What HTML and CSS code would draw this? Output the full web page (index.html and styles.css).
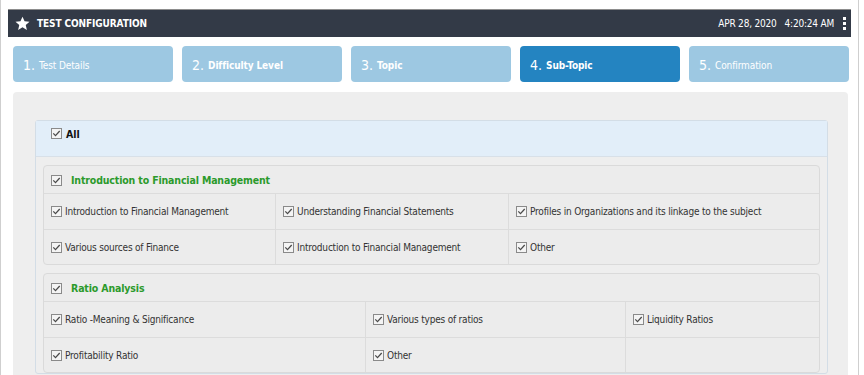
FILE: index.html
```html
<!DOCTYPE html>
<html>
<head>
<meta charset="utf-8">
<link rel="stylesheet" href="styles.css">
</head>
<body>
<div class="frame">
  <header class="topbar">
    <div class="title">
      <svg class="star" width="15" height="15" viewBox="0 0 24 24"><path fill="#fff" d="M12 1l3.3 7.3 7.9.8-6 5.3 1.8 7.8L12 18.1l-7 4.1 1.8-7.8-6-5.3 7.9-.8z"/></svg>
      <span>TEST CONFIGURATION</span>
    </div>
    <div class="meta">
      <span class="date">APR 28, 2020&nbsp;&nbsp;&nbsp;4:20:24 AM</span>
      <span class="kebab"><i></i><i></i><i></i></span>
    </div>
  </header>

  <nav class="steps">
    <div class="step"><span class="num">1.</span><span class="lbl">Test Details</span></div>
    <div class="step"><span class="num">2.</span><span class="lbl b">Difficulty Level</span></div>
    <div class="step"><span class="num">3.</span><span class="lbl b">Topic</span></div>
    <div class="step active"><span class="num">4.</span><span class="lbl b">Sub-Topic</span></div>
    <div class="step"><span class="num">5.</span><span class="lbl">Confirmation</span></div>
  </nav>

  <main class="panel">
    <div class="allbox">
      <div class="allhead">
        <span class="cb"><svg width="11" height="11" viewBox="0 0 11 11"><rect x="0.5" y="0.5" width="10" height="10" fill="#f4f4f4" stroke="#8a8a8a"/><path d="M2.3 5.4l2.2 2.2 4.2-4.6" fill="none" stroke="#4a4a4a" stroke-width="1.3"/></svg></span>
        <span class="alltxt">All</span>
      </div>
      <div class="allbody">
        <section class="group">
          <div class="ghead">
            <span class="cb"><svg width="11" height="11" viewBox="0 0 11 11"><rect x="0.5" y="0.5" width="10" height="10" fill="#f4f4f4" stroke="#8a8a8a"/><path d="M2.3 5.4l2.2 2.2 4.2-4.6" fill="none" stroke="#4a4a4a" stroke-width="1.3"/></svg></span>
            <span class="gtitle">Introduction to Financial Management</span>
          </div>
          <div class="grid cols-a">
            <div class="cell"><span class="cb"><svg width="11" height="11" viewBox="0 0 11 11"><rect x="0.5" y="0.5" width="10" height="10" fill="#f4f4f4" stroke="#8a8a8a"/><path d="M2.3 5.4l2.2 2.2 4.2-4.6" fill="none" stroke="#4a4a4a" stroke-width="1.3"/></svg></span>Introduction to Financial Management</div>
            <div class="cell"><span class="cb"><svg width="11" height="11" viewBox="0 0 11 11"><rect x="0.5" y="0.5" width="10" height="10" fill="#f4f4f4" stroke="#8a8a8a"/><path d="M2.3 5.4l2.2 2.2 4.2-4.6" fill="none" stroke="#4a4a4a" stroke-width="1.3"/></svg></span>Understanding Financial Statements</div>
            <div class="cell"><span class="cb"><svg width="11" height="11" viewBox="0 0 11 11"><rect x="0.5" y="0.5" width="10" height="10" fill="#f4f4f4" stroke="#8a8a8a"/><path d="M2.3 5.4l2.2 2.2 4.2-4.6" fill="none" stroke="#4a4a4a" stroke-width="1.3"/></svg></span>Profiles in Organizations and its linkage to the subject</div>
            <div class="cell"><span class="cb"><svg width="11" height="11" viewBox="0 0 11 11"><rect x="0.5" y="0.5" width="10" height="10" fill="#f4f4f4" stroke="#8a8a8a"/><path d="M2.3 5.4l2.2 2.2 4.2-4.6" fill="none" stroke="#4a4a4a" stroke-width="1.3"/></svg></span>Various sources of Finance</div>
            <div class="cell"><span class="cb"><svg width="11" height="11" viewBox="0 0 11 11"><rect x="0.5" y="0.5" width="10" height="10" fill="#f4f4f4" stroke="#8a8a8a"/><path d="M2.3 5.4l2.2 2.2 4.2-4.6" fill="none" stroke="#4a4a4a" stroke-width="1.3"/></svg></span>Introduction to Financial Management</div>
            <div class="cell"><span class="cb"><svg width="11" height="11" viewBox="0 0 11 11"><rect x="0.5" y="0.5" width="10" height="10" fill="#f4f4f4" stroke="#8a8a8a"/><path d="M2.3 5.4l2.2 2.2 4.2-4.6" fill="none" stroke="#4a4a4a" stroke-width="1.3"/></svg></span>Other</div>
          </div>
        </section>

        <section class="group">
          <div class="ghead">
            <span class="cb"><svg width="11" height="11" viewBox="0 0 11 11"><rect x="0.5" y="0.5" width="10" height="10" fill="#f4f4f4" stroke="#8a8a8a"/><path d="M2.3 5.4l2.2 2.2 4.2-4.6" fill="none" stroke="#4a4a4a" stroke-width="1.3"/></svg></span>
            <span class="gtitle">Ratio Analysis</span>
          </div>
          <div class="grid cols-b">
            <div class="cell"><span class="cb"><svg width="11" height="11" viewBox="0 0 11 11"><rect x="0.5" y="0.5" width="10" height="10" fill="#f4f4f4" stroke="#8a8a8a"/><path d="M2.3 5.4l2.2 2.2 4.2-4.6" fill="none" stroke="#4a4a4a" stroke-width="1.3"/></svg></span>Ratio -Meaning &amp; Significance</div>
            <div class="cell"><span class="cb"><svg width="11" height="11" viewBox="0 0 11 11"><rect x="0.5" y="0.5" width="10" height="10" fill="#f4f4f4" stroke="#8a8a8a"/><path d="M2.3 5.4l2.2 2.2 4.2-4.6" fill="none" stroke="#4a4a4a" stroke-width="1.3"/></svg></span>Various types of ratios</div>
            <div class="cell"><span class="cb"><svg width="11" height="11" viewBox="0 0 11 11"><rect x="0.5" y="0.5" width="10" height="10" fill="#f4f4f4" stroke="#8a8a8a"/><path d="M2.3 5.4l2.2 2.2 4.2-4.6" fill="none" stroke="#4a4a4a" stroke-width="1.3"/></svg></span>Liquidity Ratios</div>
            <div class="cell"><span class="cb"><svg width="11" height="11" viewBox="0 0 11 11"><rect x="0.5" y="0.5" width="10" height="10" fill="#f4f4f4" stroke="#8a8a8a"/><path d="M2.3 5.4l2.2 2.2 4.2-4.6" fill="none" stroke="#4a4a4a" stroke-width="1.3"/></svg></span>Profitability Ratio</div>
            <div class="cell"><span class="cb"><svg width="11" height="11" viewBox="0 0 11 11"><rect x="0.5" y="0.5" width="10" height="10" fill="#f4f4f4" stroke="#8a8a8a"/><path d="M2.3 5.4l2.2 2.2 4.2-4.6" fill="none" stroke="#4a4a4a" stroke-width="1.3"/></svg></span>Other</div>
            <div class="cell"></div>
          </div>
        </section>
      </div>
    </div>
  </main>
</div>
</body>
</html>
```

FILE: styles.css
```css
* { box-sizing: border-box; }
html, body { margin: 0; padding: 0; background: #fff; }
body {
  font-family: "DejaVu Sans Condensed", "DejaVu Sans", sans-serif;
  font-size: 11px;
  color: #333;
  overflow: hidden;
}
.frame {
  width: 859px;
  height: 375px;
  border-left: 1px solid #cfcfcf;
  border-right: 1px solid #cfcfcf;
  padding: 9px 7px 0 7px;
  overflow: hidden;
}
.topbar {
  height: 28px;
  background: #333a47;
  border-top: 1px solid #8d8d8d;
  display: flex;
  align-items: center;
  justify-content: space-between;
  color: #fff;
  padding: 0 5px 0 7px;
}
.title { display: flex; align-items: center; gap: 7px; }
.title span { font-weight: bold; font-size: 10px; letter-spacing: -0.1px; }
.star { display: block; margin-top: -1px; }
.meta { display: flex; align-items: center; gap: 9px; }
.date { font-size: 10px; letter-spacing: -0.2px; }
.kebab { display: flex; flex-direction: column; gap: 2px; }
.kebab i { display: block; width: 3px; height: 3px; background: #fff; }

.steps {
  margin-top: 9px;
  height: 36px;
  padding: 0 2px 0 5px;
  display: grid;
  grid-template-columns: repeat(5, 1fr);
  gap: 9px;
}
.step {
  background: #9dc8e2;
  border-radius: 4px;
  color: #fff;
  display: flex;
  align-items: center;
  padding: 2px 0 0 10px;
}
.step.active { background: #2484c1; }
.num { font-size: 14px; margin-right: 4px; }
.lbl { font-size: 10px; letter-spacing: -0.1px; }
.lbl.b { font-weight: bold; }

.panel {
  margin: 10px 3px 0 5px;
  background: #eeeeee;
  border-radius: 4px;
  padding: 28px 20px 20px 22px;
  height: 300px;
}
.allbox {
  border: 1px solid #d3dde6;
  border-radius: 3px;
  background: #eeeeee;
}
.allhead {
  height: 36px;
  background: #e2eef9;
  border-bottom: 1px solid #d8e0e8;
  display: flex;
  align-items: center;
  padding: 0 0 10px 15px;
}
.alltxt { font-weight: bold; color: #111; margin-left: 1px; font-size: 10.5px; }
.allbody { padding: 8px 7px 0 7px; display: flex; flex-direction: column; gap: 8px; }
.group {
  border: 1px solid #dadada;
  border-radius: 4px;
  background: #ececec;
}
.ghead {
  height: 28px;
  display: flex;
  align-items: center;
  padding: 1px 0 0 7px;
  border-bottom: 1px solid #dcdcdc;
}
.gtitle { color: #2b9a2b; font-weight: bold; margin-left: 6px; font-size: 10.5px; letter-spacing: -0.15px; }
.grid { display: grid; }
.cols-a { grid-template-columns: 231px 233px 1fr; }
.cols-b { grid-template-columns: 321px 260px 1fr; }
.cell {
  height: 35px;
  display: flex;
  align-items: center;
  padding-left: 7px;
  border-left: 1px solid #dcdcdc;
  border-top: 1px solid #dcdcdc;
  color: #333;
  font-size: 10px;
  letter-spacing: -0.2px;
}
.cell:nth-child(3n+1) { border-left: none; }
.cell:nth-child(-n+3) { border-top: none; }
.cb { display: inline-flex; margin-right: 3px; }
.cb svg { display: block; }
```
